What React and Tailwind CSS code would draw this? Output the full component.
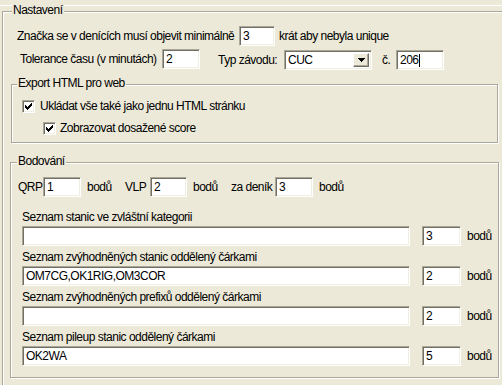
import React from 'react';

// sunken 3D field like a classic Windows edit box
function Field({ className = '', value = '', caret = false }) {
  return (
    <div
      className={`bg-white border border-t-[#ACA899] border-l-[#ACA899] border-b-white border-r-white shadow-[inset_1px_1px_0_#716F64,inset_-1px_-1px_0_#F1EFE2] h-[20px] pl-[3px] pt-[3px] leading-[13px] flex items-start ${className}`}
    >
      <span>{value}</span>
      {caret && <span className="w-px h-[13px] bg-black" />}
    </div>
  );
}

function Select({ value }) {
  return (
    <div className="w-[88px] h-[20px] bg-white border border-t-[#ACA899] border-l-[#ACA899] border-b-white border-r-white shadow-[inset_1px_1px_0_#716F64,inset_-1px_-1px_0_#F1EFE2] flex items-stretch p-[2px] pl-[3px]">
      <span className="flex-1 pt-px leading-[13px]">{value}</span>
      <div className="w-[16px] bg-[#ECE9D8] border border-t-white border-l-white border-b-[#716F64] border-r-[#716F64] shadow-[inset_-1px_-1px_0_#ACA899] flex items-center justify-center">
        <svg width="7" height="4" viewBox="0 0 7 4" shapeRendering="crispEdges">
          <path d="M0 0h7v1H0zM1 1h5v1H1zM2 2h3v1H2zM3 3h1v1H3z" fill="#000" />
        </svg>
      </div>
    </div>
  );
}

function Check() {
  return (
    <div className="w-[13px] h-[13px] bg-white border border-t-[#ACA899] border-l-[#ACA899] border-b-white border-r-white shadow-[inset_1px_1px_0_#716F64,inset_-1px_-1px_0_#F1EFE2] flex items-center justify-center shrink-0">
      <svg width="7" height="7" viewBox="0 0 7 7" shapeRendering="crispEdges">
        <path d="M0 2h1v3H0zM1 3h1v3H1zM2 4h1v3H2zM3 3h1v3H3zM4 2h1v3H4zM5 1h1v3H5zM6 0h1v3H6z" fill="#000" />
      </svg>
    </div>
  );
}

function Legend({ children, className = '' }) {
  return (
    <span className={`absolute top-[-8px] px-px bg-[#ECE9D8] leading-[13px] ${className}`}>{children}</span>
  );
}

const lists = [
  { label: 'Seznam stanic ve zvláštní kategorii', value: '', points: '3' },
  { label: 'Seznam zvýhodněných stanic oddělený čárkami', value: 'OM7CG,OK1RIG,OM3COR', points: '2' },
  { label: 'Seznam zvýhodněných prefixů oddělený čárkami', value: '', points: '2' },
  { label: 'Seznam pileup stanic oddělený čárkami', value: 'OK2WA', points: '5' },
];

export default function App() {
  return (
    <div className="w-[502px] h-[385px] overflow-hidden whitespace-nowrap bg-[#ECE9D8] text-[12px] tracking-[-0.5px] leading-[13px] text-black font-['Liberation_Sans',sans-serif]">
      <div className="h-px bg-white mt-[5px]" />

      {/* Nastavení */}
      <div className="relative ml-[2px] mt-[5px] w-[520px] h-[400px] border-l border-t border-[#ACA899] shadow-[inset_1px_1px_0_#fff]">
        <Legend className="left-[9px]">Nastavení</Legend>

        <div className="flex items-center mt-[14px] h-[20px] pl-[14px]">
          <span className="w-[222px]">Značka se v denících musí objevit minimálně</span>
          <Field className="w-[36px]" value="3" />
          <span className="ml-[4px]">krát aby nebyla unique</span>
        </div>

        <div className="flex items-center mt-[3px] h-[20px] pl-[17px]">
          <span className="w-[142px]">Tolerance času (v minutách)</span>
          <Field className="w-[38px]" value="2" />
          <span className="ml-[18px] w-[66px] mt-[2px]">Typ závodu:</span>
          <div className="mt-[2px]">
            <Select value="CUC" />
          </div>
          <span className="ml-[10px] w-[14px] mt-[2px]">č.</span>
          <Field className="w-[48px] mt-[2px]" value="206" caret />
        </div>

        {/* Export HTML pro web */}
        <div className="relative ml-[8px] mt-[15px] w-[487px] h-[59px] border border-[#ACA899] shadow-[inset_1px_1px_0_#fff,1px_1px_0_#fff]">
          <Legend className="left-[5px]">Export HTML pro web</Legend>
          <div className="flex items-center mt-[15px] pl-[10px] h-[13px]">
            <Check />
            <span className="ml-[5px]">Ukládat vše také jako jednu HTML stránku</span>
          </div>
          <div className="flex items-center mt-[9px] pl-[31px] h-[13px]">
            <Check />
            <span className="ml-[4px]">Zobrazovat dosažené score</span>
          </div>
        </div>

        {/* Bodování */}
        <div className="relative ml-[7px] mt-[19px] w-[489px] h-[216px] border border-[#ACA899] shadow-[inset_1px_1px_0_#fff,1px_1px_0_#fff]">
          <Legend className="left-[6px]">Bodování</Legend>

          <div className="flex items-center mt-[14px] h-[20px] pl-[7px]">
            <span className="w-[25px]">QRP</span>
            <Field className="w-[38px]" value="1" />
            <span className="ml-[6px] w-[38px]">bodů</span>
            <span className="w-[25px]">VLP</span>
            <Field className="w-[37px]" value="2" />
            <span className="ml-[6px] w-[38px]">bodů</span>
            <span className="w-[44px]">za deník</span>
            <Field className="w-[38px]" value="3" />
            <span className="ml-[6px]">bodů</span>
          </div>

          <div className="mt-[9px] pl-[11px]">
            {lists.map((l) => (
              <div key={l.label} className="pt-[5px]">
                <div className="h-[13px] mb-[2px]">{l.label}</div>
                <div className="flex items-center h-[20px]">
                  <Field className="w-[388px]" value={l.value} />
                  <Field className="ml-[12px] w-[39px]" value={l.points} />
                  <span className="ml-[6px]">bodů</span>
                </div>
              </div>
            ))}
          </div>
        </div>
      </div>
    </div>
  );
}
